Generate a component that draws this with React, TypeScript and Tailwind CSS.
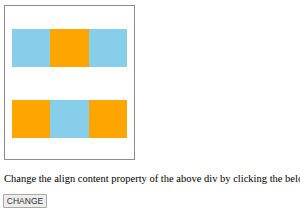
export default function App() {
  const top = ["bg-[#87ceeb]", "bg-[#ffa500]", "bg-[#87ceeb]"];
  const bottom = ["bg-[#ffa500]", "bg-[#87ceeb]", "bg-[#ffa500]"];

  return (
    <div className="w-[300px] h-[210px] bg-white pl-[4px] pt-[5px] overflow-hidden">
      {/* Flex box */}
      <div className="w-[131px] h-[155px] border border-[#8c8c8c] px-[7px] pt-[23px] flex flex-col gap-[33px]">
        <div className="flex h-[38px]">
          {top.map((c, i) => (
            <div key={i} className={`flex-1 ${c}`}></div>
          ))}
        </div>
        <div className="flex h-[38px]">
          {bottom.map((c, i) => (
            <div key={i} className={`flex-1 ${c}`}></div>
          ))}
        </div>
      </div>

      <p className="mt-[12px] whitespace-nowrap text-[10.5px] leading-[13px] text-black font-['Liberation_Serif',serif]">
        Change the align content property of the above div by clicking the below button.
      </p>

      <button className="mt-[9px] -ml-[1px] h-[14px] w-[44px] border border-[#a8a8a8] bg-[#ececec] text-[8.5px] leading-[12px] text-[#333] font-['Liberation_Sans',sans-serif] rounded-[1px]">
        CHANGE
      </button>
    </div>
  );
}
